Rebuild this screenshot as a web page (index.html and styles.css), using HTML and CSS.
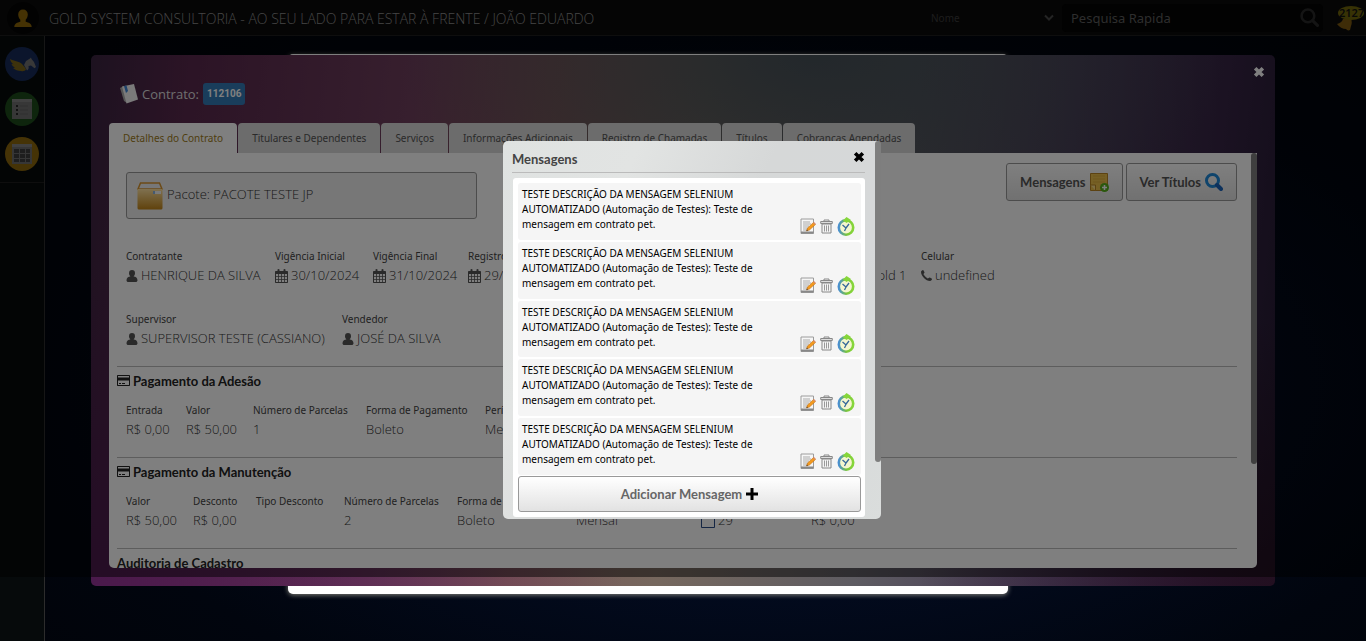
FILE: index.html
```html
<!DOCTYPE html>
<html lang="pt-BR">
<head>
<meta charset="utf-8">
<title>Gold System - Contrato 112106</title>
<meta name="viewport" content="width=device-width, initial-scale=1">
<link rel="stylesheet" href="styles.css">
</head>
<body>
<svg class="defs" aria-hidden="true">
  <defs>
    <linearGradient id="g-box" x1="0" y1="0" x2="0" y2="1"><stop offset="0" stop-color="#ffe2a0"/><stop offset="1" stop-color="#c08418"/></linearGradient>
    <linearGradient id="g-ring" x1="0" y1="0" x2="1" y2="0"><stop offset="0" stop-color="#4a8fd0"/><stop offset=".55" stop-color="#7cc63a"/><stop offset="1" stop-color="#86d63a"/></linearGradient>
    <symbol id="user" viewBox="0 0 11 12"><path d="M5.500 0a3 3.200 0 0 1 3 3.200c0 1.300-.6 2.500-1.400 3.200C9.300 6.600 11 7.800 11 10.200c0 1.200-.7 1.800-1.800 1.800H1.800C.7 12 0 11.400 0 10.200 0 7.800 1.700 6.600 3.900 6.400 3.100 5.700 2.500 4.500 2.500 3.200A3 3.200 0 0 1 5.500 0z"/></symbol>
    <symbol id="cal" viewBox="0 0 13 14"><path fill-rule="evenodd" d="M1 2h1.500V.8C2.500.3 2.900 0 3.500 0s1 .3 1 .8V2h4V.8c0-.5.4-.8 1-.8s1 .3 1 .8V2H12c.6 0 1 .4 1 1v10c0 .6-.4 1-1 1H1c-.6 0-1-.4-1-1V3c0-.6.4-1 1-1zm0 3v2h2.200V5zm3 0v2h2.200V5zm3 0v2h2.200V5zm3 0v2h2V5zM1 7.700v2.300h2.200V7.700zm3 0v2.300h2.200V7.700zm3 0v2.300h2.200V7.700zm3 0v2.300h2V7.700zM1 10.800V13h2.200v-2.200zm3 0V13h2.200v-2.200zm3 0V13h2.200v-2.200zm3 0V13h2v-2.200z"/></symbol>
    <symbol id="phone" viewBox="0 0 11 11"><path d="M0 2C0 1.100 1.200.1 2 0c.5 0 1.300 1.700 1.500 2.300.2.700-1 1.300-1 1.800 0 .9 3.300 4.200 4.400 4.400.5 0 1.100-1.200 1.800-1 .6.200 2.300 1 2.300 1.500 0 .9-1 2-2 2C5 11 0 6 0 2z"/></symbol>
    <symbol id="card" viewBox="0 0 13 11"><path fill-rule="evenodd" d="M1 0h11c.6 0 1 .4 1 1v9c0 .6-.4 1-1 1H1c-.6 0-1-.4-1-1V1c0-.6.4-1 1-1zm0 1v1.500h11V1zm0 4.500V10h11V5.500zM2 8h2v1H2zm3 0h3v1H5z"/></symbol>
    <symbol id="glass" viewBox="0 0 18 18"><circle cx="7.500" cy="7.500" r="6" fill="none" stroke="currentColor" stroke-width="2.400"/><path d="M12 12l4.500 4.500" stroke="currentColor" stroke-width="3" stroke-linecap="round"/></symbol>
    <symbol id="lens" viewBox="0 0 18 18"><circle cx="7.500" cy="7.500" r="6" fill="none" stroke="currentColor" stroke-width="3"/><path d="M12 12l4 4" stroke="#1a62b8" stroke-width="4" stroke-linecap="round"/></symbol>
    <symbol id="close" viewBox="0 0 10 10"><path d="M1.800 1.800l6.400 6.400M8.200 1.800L1.800 8.200" stroke="currentColor" stroke-width="3"/></symbol>
    <symbol id="edit" viewBox="0 0 16 16"><path d="M1 1h12.500v14.500H1z" fill="#f6f6f6" stroke="#9c9c9c"/><path d="M1 13.500h12.500v2H1z" fill="#888"/><path d="M3 4h7M3 6h8M3 8h6M3 10h5M3 12h4" stroke="#aaa"/><path d="M6.500 13l1-3 6-5.500 2 2-6 5.500z" fill="#f39a1e" stroke="#b8650c" stroke-width=".5"/><path d="M13 5l1-1 1.800 1.800-1 1z" fill="#d98a6c"/><path d="M6.500 13l.5-1.500 1 1z" fill="#333"/></symbol>
    <symbol id="trash" viewBox="0 0 13 15"><path d="M4 2.500V1h5v1.500" fill="none" stroke="#888"/><path d="M.7 2.500h11.600v2H.7z" fill="#ddd" stroke="#888"/><path d="M2 5h9v9H2z" fill="#f4f4f4" stroke="#888"/><path d="M4.500 6.500v6M6.500 6.500v6M8.500 6.500v6" stroke="#999"/></symbol>
    <symbol id="clock" viewBox="0 0 18 19"><circle cx="9" cy="10.500" r="7.200" fill="#f4f6cf" stroke="url(#g-ring)" stroke-width="2.600"/><path d="M6 3.500L9.500 0l4.500 3-4.500 3z" fill="#86d63a"/><path d="M9 11L5.500 8M9 11L12 7M9 11l-1.500 3" stroke="#37699b" stroke-width="1.300" fill="none"/></symbol>
  </defs>
</svg>

<header class="topbar">
  <a class="avatar" href="#" aria-label="Perfil"><svg viewBox="0 0 32 32" width="32" height="32"><circle cx="16" cy="16" r="16" fill="#050505"/><path d="M16 7.500c3 0 4.800 2 4.800 5 0 2.200-.9 4-2.100 5.200v2c3 .9 5.800 1.600 6 5.300H7.300c.2-3.700 3-4.400 6-5.300v-2c-1.200-1.200-2.100-3-2.100-5.200 0-3 1.800-5 4.800-5z" fill="#8a6408"/></svg></a>
  <h1 class="brand">GOLD SYSTEM CONSULTORIA - AO SEU LADO PARA ESTAR À FRENTE / JOÃO EDUARDO</h1>
  <select class="kind" aria-label="Tipo de pesquisa"><option>Nome</option></select>
  <svg class="chevron" viewBox="0 0 10 8" width="10" height="8"><path d="M1 1.500l4 4 4-4" fill="none" stroke="#484848" stroke-width="2"/></svg>
  <form class="search">
    <input type="text" placeholder="Pesquisa Rapida" aria-label="Pesquisa Rapida">
    <button type="button" aria-label="Pesquisar"><svg width="19" height="19"><use href="#glass"/></svg></button>
  </form>
  <a class="bell" href="#"><svg viewBox="0 0 28 26" width="28" height="26"><path d="M1 19c3-1 5-2 6-5l8-1c1 3 1 6 0 8l-1 4c-2 1-3 0-4-1-3 0-7-2-9-5z" fill="#7c5810"/><ellipse cx="15" cy="8" rx="13" ry="7" fill="#6f640a"/></svg><span>2127</span></a>
</header>

<div class="shell">
  <nav class="rail">
    <a href="#" aria-label="Início"><svg viewBox="0 0 34 34" width="34" height="34"><circle cx="17" cy="17" r="17" fill="#162a58"/><path d="M5 12c4 2 9 2 12 5l3 3.500 1 2c-1 1.500-3 2-5 1.500-3 0-6-1-8-3l2-.3C8 19.500 7 18.500 6.500 17l2 .3C6.500 16 5.500 14.500 5 12z" fill="#7a6418"/><path d="M19 18l2-4 4-2.500 1-1 .5 1.500 2.500 3 2 5-1.500 1.200-3.500-2.700-2.500.5c.5 2 0 3.500-1.500 4.500z" fill="#707070"/></svg></a>
    <a href="#" aria-label="Cadastros"><svg viewBox="0 0 34 34" width="34" height="34"><circle cx="17" cy="17" r="17" fill="#1c4a1a"/><path d="M7 7h20v20H7z" fill="#6e6e6e"/><path d="M7 7h20v3H7z" fill="#808080"/><path d="M11 14h2M11 18h2M11 22h2" stroke="#262626" stroke-width="2"/><path d="M15 14h8M15 18h8M15 22h8" stroke="#606060"/></svg></a>
    <a href="#" aria-label="Agenda"><svg viewBox="0 0 34 34" width="34" height="34"><circle cx="17" cy="17" r="17" fill="#8a660c"/><path d="M7 7h20v20H7z" fill="#6c6c6c"/><path d="M7 7h20v3H7z" fill="#808080"/><path d="M9 12h5v4H9zM15 12h5v4h-5zM21 12h4v4h-4zM9 17h5v4H9zM15 17h5v4h-5zM21 17h4v4h-4zM9 22h5v3H9zM15 22h5v3h-5zM21 22h4v3h-4z" fill="#3c3c3c"/></svg></a>
  </nav>
  <main class="stage"><div class="sheet"></div></main>
</div>

<div class="layer">
  <section class="contract" aria-label="Contrato">
    <button class="x x-light" type="button" aria-label="Fechar contrato"><svg width="12" height="12"><use href="#close"/></svg></button>
    <h2 class="title"><svg viewBox="0 0 18 20" width="18" height="20"><path d="M0 4l4 13 3 2L4 2z" fill="#aaa"/><path d="M2 2.500L14 0l4 15.500L6.500 19.500z" fill="#f4f4f4"/><path d="M4 2l2.500-.5L8 7l-2 2z" fill="#3f86d8"/></svg><span>Contrato:</span><strong>112106</strong></h2>
    <nav class="tabs">
      <a class="on" href="#">Detalhes do Contrato</a><a href="#">Titulares e Dependentes</a><a href="#">Serviços</a><a href="#">Informações Adicionais</a><a href="#">Registro de Chamadas</a><a href="#">Títulos</a><a href="#">Cobranças Agendadas</a>
    </nav>
    <div class="panel">
      <div class="bar"></div>
      <div class="head">
        <div class="package"><svg viewBox="0 0 26 28" width="26" height="28"><path d="M3.500 1h19l2.500 6H1z" fill="#eee" stroke="#d9952c" stroke-width="1.500"/><path d="M.5 7h25v19a1.500 1.500 0 0 1-1.500 1.500H2A1.500 1.500 0 0 1 .5 26z" fill="url(#g-box)"/><path d="M16 9h8v3h-8z" fill="#f4f4f4"/><path d="M16 9h2v3h-2z" fill="#8db4e0"/></svg><span>Pacote: PACOTE TESTE JP</span></div>
        <div class="actions">
          <button type="button">Mensagens <svg viewBox="0 0 19 19" width="19" height="19"><path d="M.5.500h17v17H.5z" fill="#ecc04a" stroke="#b98424"/><path d="M3 3h12M3 6h12M3 9h12" stroke="#dcae3c"/><path d="M.5 12h5v5.500" fill="#f8dc8a" stroke="#b98424"/><circle cx="14.500" cy="14.500" r="4.500" fill="#57b01c"/><path d="M14.500 12v5M12 14.500h5" stroke="#fff" stroke-width="1.600"/></svg></button>
          <button type="button">Ver Títulos <svg class="blue" width="18" height="18"><use href="#lens"/></svg></button>
        </div>
      </div>

      <dl class="row people">
        <div><dt>Contratante</dt><dd><svg width="12" height="12"><use href="#user"/></svg>HENRIQUE DA SILVA</dd></div>
        <div><dt>Vigência Inicial</dt><dd><svg width="13" height="14"><use href="#cal"/></svg>30/10/2024</dd></div>
        <div><dt>Vigência Final</dt><dd><svg width="13" height="14"><use href="#cal"/></svg>31/10/2024</dd></div>
        <div><dt>Registro</dt><dd><svg width="13" height="14"><use href="#cal"/></svg>29/10/2024</dd></div>
        <div><dt></dt><dd>Gold 1</dd></div>
        <div><dt>Celular</dt><dd><svg width="11" height="11"><use href="#phone"/></svg>undefined</dd></div>
      </dl>
      <dl class="row staff">
        <div><dt>Supervisor</dt><dd><svg width="12" height="12"><use href="#user"/></svg>SUPERVISOR TESTE (CASSIANO)</dd></div>
        <div><dt>Vendedor</dt><dd><svg width="12" height="12"><use href="#user"/></svg>JOSÉ DA SILVA</dd></div>
      </dl>

      <h3 class="section"><svg width="13" height="11"><use href="#card"/></svg>Pagamento da Adesão</h3>
      <dl class="row joining">
        <div><dt>Entrada</dt><dd>R$ 0,00</dd></div>
        <div><dt>Valor</dt><dd>R$ 50,00</dd></div>
        <div><dt>Número de Parcelas</dt><dd>1</dd></div>
        <div><dt>Forma de Pagamento</dt><dd>Boleto</dd></div>
        <div><dt>Período</dt><dd>Mensal</dd></div>
      </dl>

      <h3 class="section"><svg width="13" height="11"><use href="#card"/></svg>Pagamento da Manutenção</h3>
      <dl class="row upkeep">
        <div><dt>Valor</dt><dd>R$ 50,00</dd></div>
        <div><dt>Desconto</dt><dd>R$ 0,00</dd></div>
        <div><dt>Tipo Desconto</dt><dd></dd></div>
        <div><dt>Número de Parcelas</dt><dd>2</dd></div>
        <div><dt>Forma de Pagamento</dt><dd>Boleto</dd></div>
        <div><dt></dt><dd>Mensal</dd></div>
        <div><dt></dt><dd><svg viewBox="0 0 14 14" width="14" height="14"><path d="M.5 1.500h13v12H.5z" fill="none" stroke="#2a4d86"/></svg>29</dd></div>
        <div><dt></dt><dd>R$ 0,00</dd></div>
      </dl>

      <h3 class="section">Auditoria de Cadastro</h3>
    </div>
  </section>
</div>

<div class="shade"></div>

<div class="layer">
  <section class="messages" aria-label="Mensagens">
    <div class="bar"></div>
    <header><h2>Mensagens</h2><button class="x" type="button" aria-label="Fechar"><svg width="12" height="12"><use href="#close"/></svg></button></header>
    <div class="paper">
      <ul>
        <li><p>TESTE DESCRIÇÃO DA MENSAGEM SELENIUM AUTOMATIZADO (Automação de Testes): Teste de mensagem em contrato pet.</p><span><button type="button" aria-label="Editar"><svg width="16" height="16"><use href="#edit"/></svg></button><button type="button" aria-label="Excluir"><svg width="13" height="15"><use href="#trash"/></svg></button><button type="button" aria-label="Agendar"><svg width="18" height="19"><use href="#clock"/></svg></button></span></li>
        <li><p>TESTE DESCRIÇÃO DA MENSAGEM SELENIUM AUTOMATIZADO (Automação de Testes): Teste de mensagem em contrato pet.</p><span><button type="button" aria-label="Editar"><svg width="16" height="16"><use href="#edit"/></svg></button><button type="button" aria-label="Excluir"><svg width="13" height="15"><use href="#trash"/></svg></button><button type="button" aria-label="Agendar"><svg width="18" height="19"><use href="#clock"/></svg></button></span></li>
        <li><p>TESTE DESCRIÇÃO DA MENSAGEM SELENIUM AUTOMATIZADO (Automação de Testes): Teste de mensagem em contrato pet.</p><span><button type="button" aria-label="Editar"><svg width="16" height="16"><use href="#edit"/></svg></button><button type="button" aria-label="Excluir"><svg width="13" height="15"><use href="#trash"/></svg></button><button type="button" aria-label="Agendar"><svg width="18" height="19"><use href="#clock"/></svg></button></span></li>
        <li><p>TESTE DESCRIÇÃO DA MENSAGEM SELENIUM AUTOMATIZADO (Automação de Testes): Teste de mensagem em contrato pet.</p><span><button type="button" aria-label="Editar"><svg width="16" height="16"><use href="#edit"/></svg></button><button type="button" aria-label="Excluir"><svg width="13" height="15"><use href="#trash"/></svg></button><button type="button" aria-label="Agendar"><svg width="18" height="19"><use href="#clock"/></svg></button></span></li>
        <li><p>TESTE DESCRIÇÃO DA MENSAGEM SELENIUM AUTOMATIZADO (Automação de Testes): Teste de mensagem em contrato pet.</p><span><button type="button" aria-label="Editar"><svg width="16" height="16"><use href="#edit"/></svg></button><button type="button" aria-label="Excluir"><svg width="13" height="15"><use href="#trash"/></svg></button><button type="button" aria-label="Agendar"><svg width="18" height="19"><use href="#clock"/></svg></button></span></li>
      </ul>
      <button class="add" type="button">Adicionar Mensagem <svg viewBox="0 0 12 12" width="12" height="12"><path d="M6 0v12M0 6h12" stroke="#000" stroke-width="3"/></svg></button>
    </div>
  </section>
</div>
</body>
</html>
```

FILE: styles.css
```css
* { box-sizing: border-box; }

body {
  margin: 0;
  min-height: 100vh;
  display: flex;
  flex-direction: column;
  overflow: hidden;
  background: radial-gradient(ellipse at 56% 60%, #06153a 0, #030c22 30%, #01050e 65%, #010206 100%);
  font: 10px/15px "Noto Sans", "Open Sans", sans-serif;
  color: #000;
}

h1, h2, h3, p, ul, dl, dd { margin: 0; padding: 0; }
ul { list-style: none; }
a { color: inherit; text-decoration: none; }
button { font: inherit; cursor: pointer; }
svg { display: block; flex: none; }
.defs { position: absolute; width: 0; height: 0; }

/* top bar */
.topbar {
  display: flex;
  align-items: center;
  height: 36px;
  padding: 0 2px 0 7px;
  background: #0b0b0b;
  border-bottom: 1px solid #1c1c1c;
}
.brand {
  flex: 1;
  padding: 2px 0 0 10px;
  font: 300 14px/20px "Open Sans", sans-serif;
  color: #8c8c8c;
  white-space: nowrap;
}
.kind {
  width: 113px;
  padding: 0;
  border: 0;
  appearance: none;
  background: none;
  font: inherit;
  line-height: 18px;
  color: #3a3a3a;
}
.chevron { margin-right: 8px; pointer-events: none; }
.search {
  display: flex;
  align-items: center;
  width: 261px;
  height: 28px;
  margin-right: 13px;
  padding: 0 4px 0 9px;
  border-radius: 4px;
  background: #040404;
}
.search input {
  flex: 1;
  min-width: 0;
  padding: 0;
  border: 0;
  background: none;
  font: 13px/20px "Noto Sans", sans-serif;
  color: #5c5c5c;
}
.search input::placeholder { color: #5c5c5c; }
.search button { padding: 0; border: 0; background: none; color: #282828; }
.bell { position: relative; }
.bell span { position: absolute; top: 0; left: 3px; font-size: 11px; font-weight: 600; color: #111; }

/* left rail and stage */
.shell { flex: 1; display: flex; }
.rail {
  display: flex;
  flex-direction: column;
  gap: 11px;
  width: 45px;
  padding: 11px 5px;
  background: linear-gradient(#1c1c1c, #1c1c1c) 0 146px / 100% 1px no-repeat, #060a0b;
  border-right: 1px solid #2c2c2c;
}
.stage { padding: 18px 0 0 243px; }
.sheet {
  width: 720px;
  height: 540px;
  border-radius: 5px;
  background: #fff;
  box-shadow: 0 1px 5px rgba(255, 251, 224, .5);
}

/* stacked dialogs */
.layer { position: absolute; inset: 0; display: flex; justify-content: center; align-items: flex-start; }
.shade { position: absolute; top: 0; left: 0; right: 0; height: 90vh; background: rgba(0, 0, 0, .5); }

.contract {
  position: relative;
  width: calc(100% - 182px);
  margin-top: 55px;
  padding: 24px 18px 18px;
  border-radius: 5px;
  background:
    radial-gradient(ellipse 45% 60% at 0 100%, rgba(74, 24, 76, .9), rgba(74, 24, 76, 0)),
    radial-gradient(ellipse 30% 50% at 100% 100%, rgba(34, 14, 30, .9), rgba(34, 14, 30, 0)),
    radial-gradient(ellipse 35% 40% at 61% 0, rgba(66, 78, 86, .9), rgba(70, 76, 84, 0)),
    linear-gradient(96deg, #3a2440 0, #58284c 8%, #6e3e5c 26%, #7c5658 38%, #76685e 50%, #5e5c62 66%, #483c56 80%, #362444 92%, #241a32 100%);
}
.x { padding: 0; border: 0; background: none; color: #000; }
.x-light { position: absolute; top: 11px; right: 10px; color: #fff; }
.title {
  display: flex;
  align-items: center;
  gap: 4px;
  height: 30px;
  margin: 0 11px 14px;
  font: 13px/20px "Open Sans", sans-serif;
  color: #ddd;
}
.title strong {
  padding: 0 4px;
  border-radius: 3px;
  background: #337ab7;
  font: 700 10px/22px Roboto, sans-serif;
  color: #fff;
}
.tabs { display: flex; gap: 1px; }
.tabs a {
  padding: 0 14px;
  border-radius: 4px 4px 0 0;
  background: #d8d8d8;
  line-height: 30px;
  color: #555;
}
.tabs .on { background: #fff; color: #a07d1c; }

.panel {
  position: relative;
  height: 415px;
  overflow: hidden;
  padding: 10px 20px 0 8px;
  border-radius: 0 0 5px 5px;
  background: #fff;
}
.bar {
  position: absolute;
  top: 0;
  right: 0;
  width: 6px;
  height: 75%;
  border-radius: 4px;
  background: #7e7e7e;
}
.head { display: flex; justify-content: space-between; align-items: flex-start; padding-left: 9px; }
.package {
  display: flex;
  align-items: center;
  gap: 4px;
  width: 351px;
  height: 47px;
  margin: 9px 0 29px;
  padding: 0 10px;
  border: 1px solid #999;
  border-radius: 3px;
  background: #eee;
  font: 300 13px/20px "Open Sans", sans-serif;
  color: #333;
}
.package span { padding-bottom: 3px; }
.actions { display: flex; gap: 3px; }
.actions button, .add {
  display: flex;
  align-items: center;
  justify-content: center;
  gap: 4px;
  height: 38px;
  padding: 0 13px;
  border: 1px solid #999;
  border-radius: 3px;
  background: linear-gradient(#fff, #e2e2e2);
  font: 700 13px/16px Lato, sans-serif;
  color: #555;
}
.blue { color: #1e88d8; }

.row { display: grid; padding-left: 9px; margin-bottom: 25px; }
.row dt { height: 17px; line-height: 17px; color: #444; white-space: nowrap; }
.row dd {
  display: flex;
  align-items: center;
  gap: 3px;
  height: 21px;
  font: 300 13px/21px "Open Sans", sans-serif;
  color: #333;
  white-space: nowrap;
}
.row svg { fill: #555; }
.people { grid-template-columns: 149px 98px 95px 400px 53px auto; }
.staff { grid-template-columns: 216px auto; margin-bottom: 17px; }
.joining { grid-template-columns: 60px 67px 113px 119px auto; margin-bottom: 17px; }
.upkeep { grid-template-columns: 67px 63px 88px 113px 119px 125px 110px auto; margin-bottom: 17px; }
.section {
  display: flex;
  align-items: center;
  gap: 3px;
  height: 36px;
  padding-bottom: 8px;
  border-top: 1px solid #bbb;
  font: 700 13px/16px Lato, sans-serif;
  color: #222;
}
.section svg { fill: #222; }

/* messages dialog */
.messages {
  position: relative;
  width: 378px;
  margin: 141px 0 0 18px;
  padding: 6px 16px 2px 9px;
  border-radius: 5px;
  background: linear-gradient(115deg, #dfe2e1 0, #e2e4e3 25%, #d6d8d8 50%, #d6d8d9 75%, #dadddc 100%);
}
.messages header {
  display: flex;
  justify-content: space-between;
  align-items: center;
  height: 26px;
  margin-bottom: 5px;
  padding-bottom: 2px;
  border-bottom: 1px solid #bbb;
}
.messages h2 { font: 700 13px/16px Lato, sans-serif; color: #444; }
.messages header .x { padding-bottom: 4px; }
.messages .bar { height: 85%; }
.paper { margin-left: 1px; padding: 5px 4px 5px 5px; border-radius: 3px; background: #fff; }
.paper ul { display: grid; grid-auto-rows: 1fr; gap: 2px; height: 292px; }
.paper li {
  display: flex;
  justify-content: space-between;
  padding: 4px 6px 4px 4px;
  border-radius: 3px;
  background: #f5f5f5;
}
.paper p { width: 250px; }
.paper li span { display: flex; align-self: flex-end; align-items: center; gap: 4px; }
.paper li button { padding: 0; border: 0; background: none; }
.add { width: 100%; height: 36px; margin-top: 1px; color: #666; }
```
